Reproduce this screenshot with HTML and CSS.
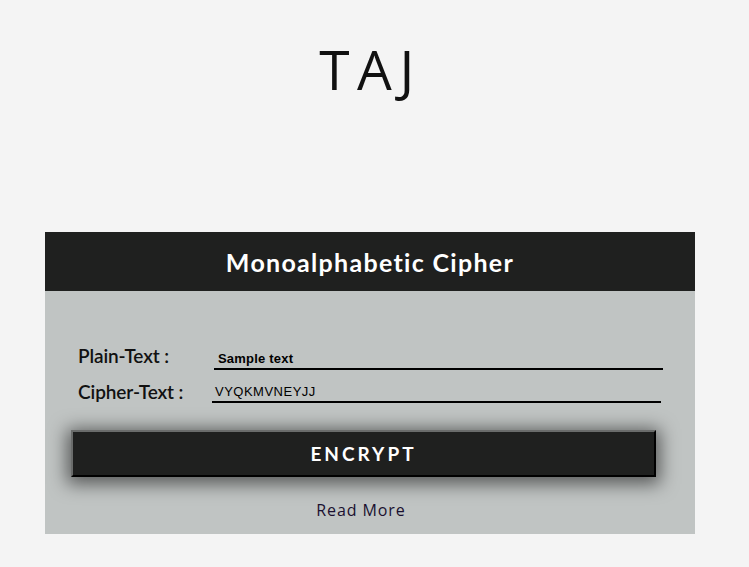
FILE: index.html
```html
<!DOCTYPE html>
<html>
<head>
<meta charset="utf-8">
<link rel="stylesheet" href="styles.css">
</head>
<body>
<h1 class="logo">TAJ</h1>
<div class="card">
  <div class="card-head">Monoalphabetic Cipher</div>
  <div class="card-body">
    <div class="row row-plain">
      <label class="lbl">Plain-Text :</label>
      <div class="field field-plain"><span class="val val-bold">Sample text</span></div>
    </div>
    <div class="row row-cipher">
      <label class="lbl">Cipher-Text :</label>
      <div class="field field-cipher"><span class="val">VYQKMVNEYJJ</span></div>
    </div>
    <button class="btn">ENCRYPT</button>
    <div class="more">Read More</div>
  </div>
</div>
</body>
</html>
```
FILE: styles.css
```css
* { box-sizing: border-box; }
html, body { margin: 0; padding: 0; }
body {
  background: #f4f4f4;
  font-family: "Open Sans", sans-serif;
  width: 749px;
  height: 567px;
  overflow: hidden;
}
.logo {
  margin: 0;
  padding-top: 34px;
  padding-right: 8px;
  height: 232px;
  text-align: center;
  font-family: "Open Sans", sans-serif;
  font-weight: 400;
  font-size: 55px;
  line-height: 70px;
  letter-spacing: 7.5px;
  color: #111;
}
.card {
  margin-left: 45px;
  width: 650px;
  height: 302px;
  background: #c0c4c3;
}
.card-head {
  height: 59px;
  background: #1f201f;
  color: #fff;
  font-family: Lato, sans-serif;
  font-weight: 700;
  font-size: 25px;
  line-height: 60px;
  text-align: center;
  letter-spacing: 1.3px;
}
.card-body {
  padding: 55px 0 0 0;
}
.row {
  display: flex;
  align-items: flex-end;
}
.row-plain { padding-left: 33px; height: 24px; }
.row-cipher { padding-left: 33px; height: 33px; }
.lbl {
  font-family: Lato, sans-serif;
  font-weight: 600;
  font-size: 19px;
  color: #111;
  letter-spacing: -0.1px;
  line-height: 22px;
}
.row-plain .lbl { width: 136px; margin-bottom: 3px; }
.row-cipher .lbl { width: 134px; margin-bottom: 0px; }
.field {
  border-bottom: 2px solid #000;
  height: 20px;
  font-family: "Liberation Sans", Arial, sans-serif;
  font-size: 13px;
  color: #000;
  line-height: 18px;
}
.field-plain { width: 449px; padding-left: 4px; }
.field-cipher { width: 449px; padding-left: 3px; }
.val-bold { font-weight: 700; }
.val { letter-spacing: 0.2px; }
.field-cipher .val { letter-spacing: 0.5px; }
.btn {
  display: block;
  margin: 27px 0 0 26px;
  width: 585px;
  height: 47px;
  background: #1f201f;
  border: 2px outset #6a6c6b;
  border-right-color: #2a2b2a;
  border-bottom-color: #2a2b2a;
  color: #fff;
  font-family: Lato, sans-serif;
  font-weight: 700;
  font-size: 19px;
  letter-spacing: 3px;
  box-shadow: 0 3px 18px 4px rgba(0,0,0,0.55);
  padding: 0;
}
.more {
  margin-top: 22px;
  padding-right: 18px;
  text-align: center;
  font-family: "Open Sans", sans-serif;
  font-size: 16px;
  color: #1a1030;
  line-height: 22px;
  letter-spacing: 0.9px;
}
```
